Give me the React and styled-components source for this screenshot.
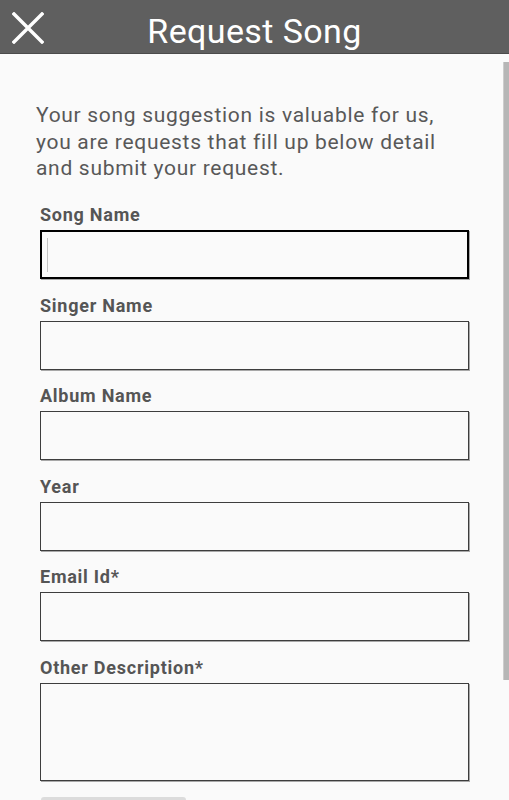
import React from "react";
import styled, { createGlobalStyle } from "styled-components";

const Global = createGlobalStyle`
  html, body { margin: 0; padding: 0; overflow: hidden; background: #fafafa; }
  * { box-sizing: border-box; }
`;

const Screen = styled.div`
  position: relative;
  width: 509px;
  height: 800px;
  overflow: hidden;
  background: #fafafa;
  font-family: Roboto, "Noto Sans", sans-serif;
`;

const Header = styled.header`
  display: grid;
  grid-template-columns: 1fr auto 1fr;
  align-items: center;
  height: 54px;
  background: #5f5f5f;
  border-bottom: 1px solid #4b4b4b;
`;

const CloseButton = styled.button`
  justify-self: start;
  display: flex;
  align-items: center;
  justify-content: center;
  width: 32px;
  height: 32px;
  margin-left: 12px;
  margin-top: 2px;
  padding: 0;
  border: none;
  background: transparent;
`;

const Title = styled.h1`
  margin: 0;
  padding-top: 8px;
  font-size: 34px;
  font-weight: 400;
  color: #ffffff;
  line-height: 40px;
  letter-spacing: 0.4px;
`;

const Content = styled.main`
  display: flex;
  flex-direction: column;
  padding: 48px 40px 0 40px;
`;

const Intro = styled.p`
  margin: 0 0 6.4px -4px;
  font-size: 21px;
  line-height: 26.7px;
  letter-spacing: 0.7px;
  color: #585858;
`;

const Field = styled.div`
  display: flex;
  flex-direction: column;
  margin-top: 15.6px;
`;

const Label = styled.label`
  font-size: 18px;
  font-weight: 700;
  line-height: 22px;
  letter-spacing: 0.75px;
  margin-bottom: 4px;
  color: #555555;
`;

const Box = styled.div`
  display: flex;
  align-items: center;
  height: ${(p) => p.$height}px;
  padding-left: ${(p) => (p.$focused ? 5 : 6)}px;
  background: #fafafa;
  border: ${(p) => (p.$focused ? "2px solid #000000" : "1.5px solid #3d3d3d")};
  box-shadow: 1px 1px 0 #a8a8a8;
`;

const Caret = styled.span`
  width: 1px;
  height: 34px;
  background: #c4c4c4;
`;

const SubmitButton = styled.button`
  width: 145px;
  height: 40px;
  margin-top: 16px;
  margin-left: 1px;
  border: none;
  border-radius: 3px 3px 0 0;
  background: #dcdcdc;
`;

const ScrollThumb = styled.div`
  position: absolute;
  top: 62px;
  right: 0;
  width: 6px;
  height: 618px;
  background: #b6b6b6;
  box-shadow: inset 1px 0 0 #cdcdcd;
`;

const fields = [
  { label: "Song Name", focused: true },
  { label: "Singer Name" },
  { label: "Album Name" },
  { label: "Year" },
  { label: "Email Id*" },
  { label: "Other Description*", height: 98 },
];

export default function App() {
  return (
    <Screen>
      <Global />
      <Header>
        <CloseButton aria-label="Close">
          <svg width="32" height="32" viewBox="0 0 32 32">
            <path
              d="M2 2 L30 30 M30 2 L2 30"
              stroke="#ffffff"
              strokeWidth="3.4"
              strokeLinecap="square"
            />
          </svg>
        </CloseButton>
        <Title>Request Song</Title>
        <span />
      </Header>
      <Content>
        <Intro>
          Your song suggestion is valuable for us, you are requests that fill up
          below detail and submit your request.
        </Intro>
        {fields.map((f) => (
          <Field key={f.label}>
            <Label>{f.label}</Label>
            <Box $height={f.height || 49} $focused={f.focused}>
              {f.focused && <Caret />}
            </Box>
          </Field>
        ))}
        <SubmitButton />
      </Content>
      <ScrollThumb />
    </Screen>
  );
}
